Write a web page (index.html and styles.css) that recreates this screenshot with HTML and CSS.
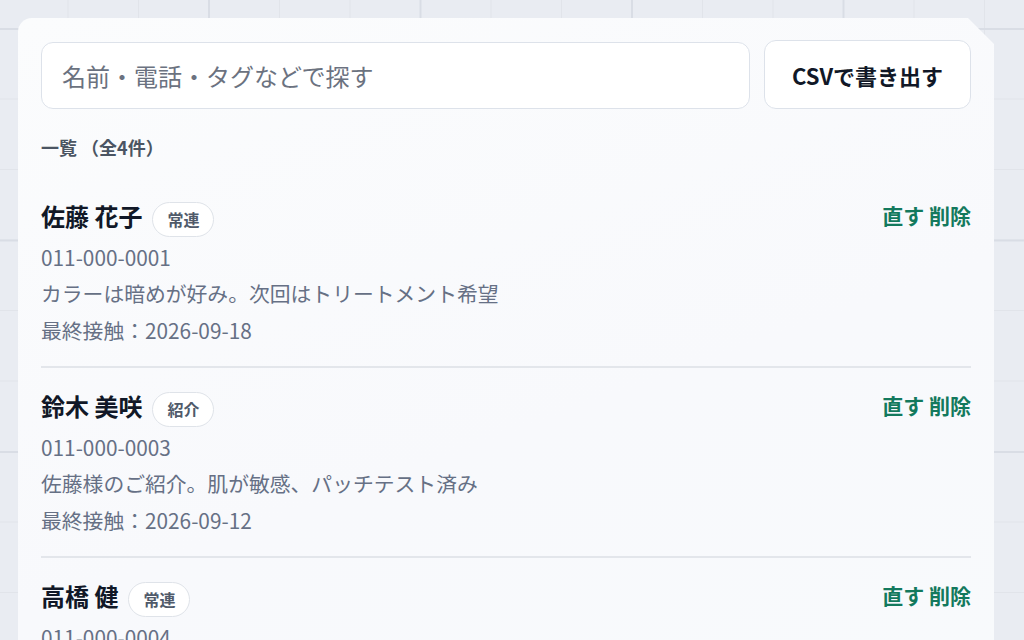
FILE: index.html
```html
<!DOCTYPE html>
<html lang="ja">
<head>
<meta charset="utf-8">
<title>顧客一覧</title>
<link rel="stylesheet" href="styles.css">
</head>
<body>
<main class="card">
  <div class="toolbar">
    <input class="search" type="text" placeholder="名前・電話・タグなどで探す">
    <button class="export" type="button">CSVで書き出す</button>
  </div>
  <div class="list-title">一覧 （全4件）</div>
  <ul class="list">
    <li class="row">
      <div class="row-head">
        <div class="who"><span class="name">佐藤 花子</span><span class="tag">常連</span></div>
        <div class="actions"><a class="act">直す</a> <a class="act">削除</a></div>
      </div>
      <div class="meta">011-000-0001</div>
      <div class="meta">カラーは暗めが好み。次回はトリートメント希望</div>
      <div class="meta">最終接触：2026-09-18</div>
    </li>
    <li class="row">
      <div class="row-head">
        <div class="who"><span class="name">鈴木 美咲</span><span class="tag">紹介</span></div>
        <div class="actions"><a class="act">直す</a> <a class="act">削除</a></div>
      </div>
      <div class="meta">011-000-0003</div>
      <div class="meta">佐藤様のご紹介。肌が敏感、パッチテスト済み</div>
      <div class="meta">最終接触：2026-09-12</div>
    </li>
    <li class="row">
      <div class="row-head">
        <div class="who"><span class="name">高橋 健</span><span class="tag">常連</span></div>
        <div class="actions"><a class="act">直す</a> <a class="act">削除</a></div>
      </div>
      <div class="meta">011-000-0004</div>
      <div class="meta">短めのカットを希望</div>
      <div class="meta">最終接触：2026-09-05</div>
    </li>
  </ul>
</main>
</body>
</html>
```

FILE: styles.css
```css
html, body {
  margin: 0;
  padding: 0;
}
body {
  width: 1024px;
  height: 640px;
  overflow: hidden;
  font-family: "Noto Sans CJK JP", "Noto Sans", sans-serif;
  background-color: #e9ecf2;
  background-image:
    linear-gradient(to right, #d9dde5 1.5px, transparent 1.5px),
    linear-gradient(to bottom, #d9dde5 1.5px, transparent 1.5px),
    linear-gradient(to right, #e1e4ea 1px, transparent 1px),
    linear-gradient(to bottom, #e1e4ea 1px, transparent 1px);
  background-size: 211.5px 211.5px, 211.5px 211.5px, 70.5px 70.5px, 70.5px 70.5px;
  background-position: 208px 28px, 208px 28px, -3px 28px, -3px 28px;
}
.card {
  box-sizing: border-box;
  margin: 18px 0 0 18px;
  width: 976px;
  height: 640px;
  padding: 22px 23px 0 23px;
  background: linear-gradient(160deg, #fbfcfd 0%, #f8f9fc 60%, #f8fafc 100%);
  border-radius: 14px 0 0 0;
  clip-path: polygon(0 0, 950px 0, 976px 26px, 976px 100%, 0 100%);
  overflow: hidden;
}
.toolbar {
  display: flex;
  align-items: flex-end;
  gap: 14px;
}
.search {
  box-sizing: border-box;
  width: 709px;
  height: 67px;
  border: 1.5px solid #dde2ea;
  border-radius: 12px;
  background: #ffffff;
  padding: 0 20px;
  font-family: inherit;
  font-size: 24px;
  color: #1f2937;
  outline: none;
}
.search::placeholder {
  color: #6b7280;
}
.export {
  box-sizing: border-box;
  width: 207px;
  height: 69px;
  border: 1.5px solid #dde2ea;
  border-radius: 12px;
  background: #ffffff;
  font-family: inherit;
  font-size: 22px;
  font-weight: 700;
  color: #111827;
  padding: 0;
}
.list-title {
  margin-top: 27px;
  font-size: 18px;
  font-weight: 700;
  line-height: 22px;
  color: #4b5563;
}
.list {
  list-style: none;
  margin: 20px 0 0 0;
  padding: 0;
}
.row {
  padding: 20px 0 18px 0;
  border-bottom: 2px solid #e3e6eb;
}
.row-head {
  display: flex;
  justify-content: space-between;
  align-items: center;
  margin-bottom: 2px;
}
.who {
  display: flex;
  align-items: baseline;
  gap: 10px;
}
.name {
  font-size: 24px;
  font-weight: 700;
  color: #111827;
}
.tag {
  box-sizing: border-box;
  height: 35px;
  display: inline-flex;
  align-items: center;
  padding: 0 14px;
  border: 1.5px solid #dfe3e9;
  border-radius: 18px;
  background: #ffffff;
  font-size: 16px;
  font-weight: 700;
  color: #505a6a;
}
.actions {
  font-size: 21px;
  font-weight: 700;
  color: #13795d;
  margin-top: -4px;
}
.act {
  color: inherit;
  text-decoration: none;
}
.meta {
  font-size: 20.8px;
  line-height: 36.5px;
  color: #667085;
}
```
